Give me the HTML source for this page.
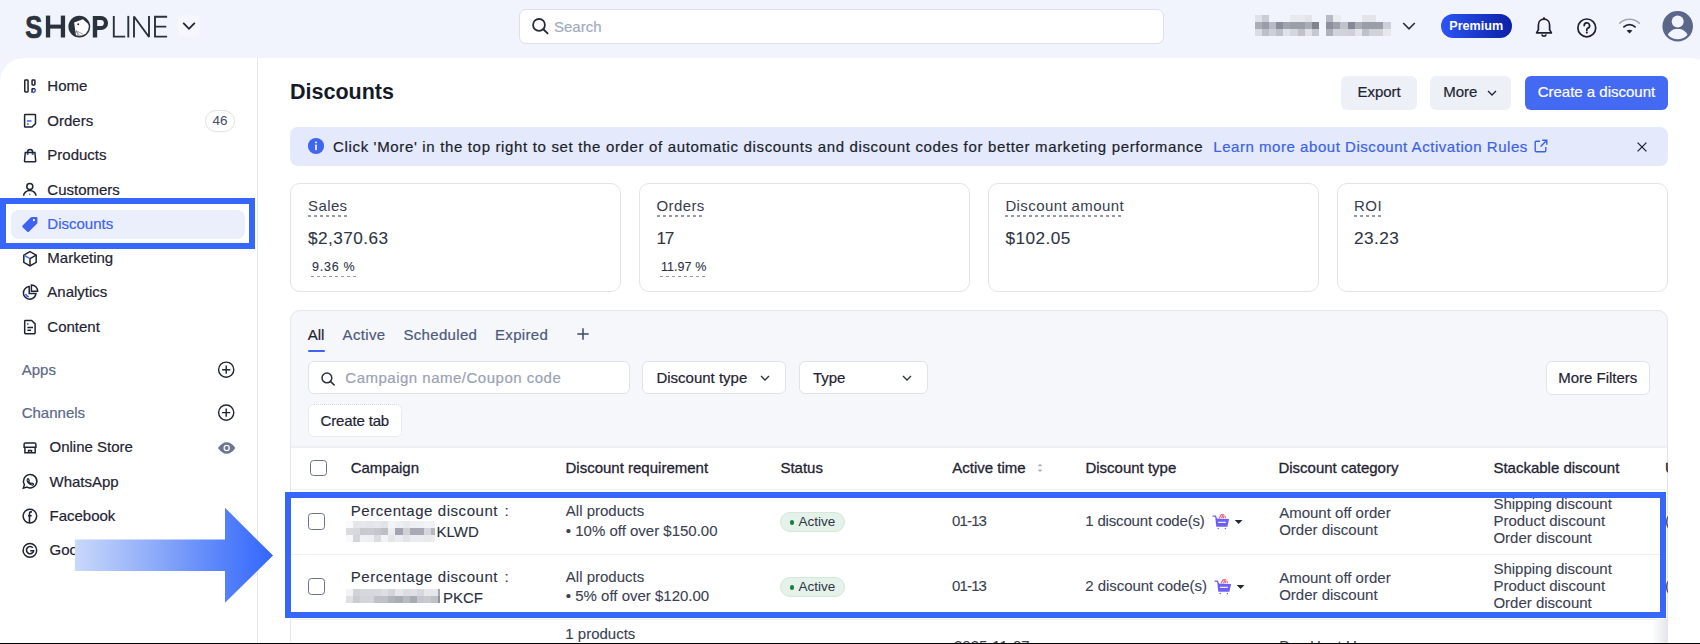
<!DOCTYPE html>
<html><head><meta charset="utf-8">
<style>
*{box-sizing:border-box;margin:0;padding:0}
html,body{width:1700px;height:644px;overflow:hidden}
body{position:relative;background:#F1F4FD;font-family:"Liberation Sans",sans-serif;color:#1F2433;font-size:15px}
.a{position:absolute;white-space:nowrap}
.t{position:absolute;white-space:nowrap;line-height:20px;height:20px;-webkit-text-stroke-width:0.2px}
svg{position:absolute;overflow:visible}
.btn{-webkit-text-stroke-width:0.2px}
.card{width:331.3px;height:108.3px;border:1px solid #E2E4EC;border-radius:10px;background:#fff}
.lbl{color:#363D4E;letter-spacing:0.4px;-webkit-text-stroke-width:0}
.lbl::after{content:"";position:absolute;left:0;right:0;top:19.2px;height:1.7px;background:repeating-linear-gradient(90deg,#959BAD 0 3.1px,transparent 3.1px 5.95px)}
.val{font-size:17.2px;color:#2E3545;letter-spacing:0.45px;-webkit-text-stroke-width:0.1px}
.pct{font-size:12.5px;color:#2C3345;letter-spacing:0.75px;-webkit-text-stroke-width:0.1px}
.pct::after{content:"";position:absolute;left:-1.2px;right:-0.6px;top:18.3px;height:1.6px;background:repeating-linear-gradient(90deg,#959BAD 0 3.1px,transparent 3.1px 5.95px)}
.tab{color:#4D5A7C;letter-spacing:0.33px}
.fbox{background:#fff;border:1px solid #E0E3EB;border-radius:6px}
.cb{width:17.3px;height:16.9px;border:1.5px solid #6B7191;border-radius:3.5px;background:#fff}
.th{color:#1F2433;-webkit-text-stroke-width:0.3px}
.td{color:#3A4152;-webkit-text-stroke-width:0.1px}
.badge{width:65px;height:19.8px;border-radius:10px;background:#E4F2EA;border:1px solid #D3E7DB;font-size:13.5px;line-height:17.8px;padding-left:17.5px;color:#2F3647}
.badge i{position:absolute;left:8.8px;top:7.3px;width:4.6px;height:4.6px;border-radius:50%;background:#1F7A45}
.cart{width:18px;height:16px}
</style></head><body>

<!-- TOP BAR -->
<svg width="1700" height="58" style="left:0;top:0" viewBox="0 0 1700 58">
  <g fill="#2A323D">
    <text x="25.3" y="37.6" font-family="Liberation Sans" font-weight="700" font-size="30.5" textLength="17" lengthAdjust="spacingAndGlyphs" stroke="#2A323D" stroke-width="0.7">S</text>
    <rect x="45.9" y="15.6" width="4.3" height="21.9"/>
    <rect x="60.8" y="15.6" width="4.3" height="21.9"/>
    <rect x="48" y="24.6" width="15" height="4"/>
    <circle cx="79.3" cy="26.6" r="10.9"/>
    <path d="M92.8 15.9h8.2a7.1 7.1 0 0 1 0 14.2h-3.8v7.4h-4.4zM97.2 19.9v6.2h3.6a3.1 3.1 0 0 0 0-6.2z" fill-rule="evenodd"/>
  </g>
  <g fill="none" stroke="#2A323D" stroke-width="1.9">
    <path d="M113.8 15.9V36.6H125.2"/>
    <path d="M128.3 15.9V37.5"/>
    <path d="M134 37.5V16.5L149 37V15.9" stroke-linejoin="bevel"/>
    <path d="M167.1 16.8H155V36.6H167.1M155 26.6H166.3"/>
  </g>
  <defs><clipPath id="oc"><circle cx="79.3" cy="26.6" r="9.5"/></clipPath></defs>
  <path d="M74.1 22.6L82.9 19.3L96 31L84 44L76.3 37.5Z" fill="#fff" clip-path="url(#oc)"/>
  <circle cx="78.2" cy="24.2" r="1" fill="#2A323D"/>
  <path d="M76 30.6L83.4 34.4M76.5 31.6L81 36.8M76.2 31L78.6 36.6" stroke="#2A323D" stroke-width="0.45" fill="none"/>
  <rect x="177.8" y="15.5" width="21.7" height="21" rx="4" fill="#F5F7FD"/>
  <path d="M183.2 22.8L189 28.8L194.8 22.8" fill="none" stroke="#1F2433" stroke-width="1.8"/>
</svg>

<!-- search -->
<div class="a" style="left:519.3px;top:9.3px;width:645px;height:34.4px;background:#fff;border:1px solid #DCE0EA;border-radius:7px"></div>
<svg width="20" height="20" style="left:530px;top:16px" viewBox="0 0 20 20"><circle cx="9" cy="8.9" r="5.9" fill="none" stroke="#262B3A" stroke-width="1.8"/><path d="M13.3 13.3L17.6 17.4" stroke="#262B3A" stroke-width="1.9" stroke-linecap="round"/></svg>
<div class="t" style="left:554px;top:16.5px;color:#A3ABBF;font-size:15px">Search</div>

<!-- account -->
<svg width="1700" height="58" style="left:0;top:0" viewBox="0 0 1700 58" shape-rendering="crispEdges"><rect x="1254.5" y="15.0" width="7.4" height="7.2" fill="#E0E2EA"/><rect x="1261.7" y="15.0" width="7.4" height="7.2" fill="#C9CCD5"/><rect x="1290.3" y="15.0" width="7.4" height="7.2" fill="#E8EAF0"/><rect x="1297.5" y="15.0" width="7.4" height="7.2" fill="#E8EAF0"/><rect x="1304.7" y="15.0" width="7.4" height="7.2" fill="#E2E4EA"/><rect x="1254.5" y="22.0" width="7.4" height="7.2" fill="#A9ADB8"/><rect x="1261.7" y="22.0" width="7.4" height="7.2" fill="#9A9EAA"/><rect x="1268.8" y="22.0" width="7.4" height="7.2" fill="#B8BBC5"/><rect x="1276.0" y="22.0" width="7.4" height="7.2" fill="#8A8E9B"/><rect x="1283.2" y="22.0" width="7.4" height="7.2" fill="#A0A4AF"/><rect x="1290.3" y="22.0" width="7.4" height="7.2" fill="#9A9EA9"/><rect x="1297.5" y="22.0" width="7.4" height="7.2" fill="#9A9EA9"/><rect x="1304.7" y="22.0" width="7.4" height="7.2" fill="#A9ADB7"/><rect x="1311.9" y="22.0" width="7.4" height="7.2" fill="#80848F"/><rect x="1254.5" y="29.0" width="7.4" height="7.2" fill="#DADCE3"/><rect x="1261.7" y="29.0" width="7.4" height="7.2" fill="#BDC0C9"/><rect x="1268.8" y="29.0" width="7.4" height="7.2" fill="#CDD0D8"/><rect x="1276.0" y="29.0" width="7.4" height="7.2" fill="#BDC0C9"/><rect x="1283.2" y="29.0" width="7.4" height="7.2" fill="#E0E2E9"/><rect x="1290.3" y="29.0" width="7.4" height="7.2" fill="#D3D6DD"/><rect x="1297.5" y="29.0" width="7.4" height="7.2" fill="#BFC2CA"/><rect x="1304.7" y="29.0" width="7.4" height="7.2" fill="#E0E2E8"/><rect x="1311.9" y="29.0" width="7.4" height="7.2" fill="#C5C8D0"/><rect x="1326.0" y="15.0" width="7.4" height="7.2" fill="#B8BBC4"/><rect x="1333.2" y="15.0" width="7.4" height="7.2" fill="#EBEDF2"/><rect x="1361.8" y="15.0" width="7.4" height="7.2" fill="#E3E5EB"/><rect x="1369.0" y="15.0" width="7.4" height="7.2" fill="#E3E5EB"/><rect x="1326.0" y="22.0" width="7.4" height="7.2" fill="#8C909C"/><rect x="1333.2" y="22.0" width="7.4" height="7.2" fill="#9DA1AC"/><rect x="1340.3" y="22.0" width="7.4" height="7.2" fill="#C0C3CC"/><rect x="1347.5" y="22.0" width="7.4" height="7.2" fill="#858995"/><rect x="1354.7" y="22.0" width="7.4" height="7.2" fill="#A9ADB7"/><rect x="1361.8" y="22.0" width="7.4" height="7.2" fill="#9A9EAA"/><rect x="1369.0" y="22.0" width="7.4" height="7.2" fill="#9A9EA9"/><rect x="1376.2" y="22.0" width="7.4" height="7.2" fill="#9A9EA9"/><rect x="1383.4" y="22.0" width="7.4" height="7.2" fill="#CDD0D8"/><rect x="1326.0" y="29.0" width="7.4" height="7.2" fill="#AEB1BB"/><rect x="1333.2" y="29.0" width="7.4" height="7.2" fill="#D0D3DA"/><rect x="1340.3" y="29.0" width="7.4" height="7.2" fill="#D0D3DA"/><rect x="1347.5" y="29.0" width="7.4" height="7.2" fill="#CDD0D8"/><rect x="1354.7" y="29.0" width="7.4" height="7.2" fill="#E3E5EB"/><rect x="1361.8" y="29.0" width="7.4" height="7.2" fill="#BEC1CA"/><rect x="1369.0" y="29.0" width="7.4" height="7.2" fill="#D0D3DA"/><rect x="1376.2" y="29.0" width="7.4" height="7.2" fill="#D0D3DA"/><rect x="1383.4" y="29.0" width="7.4" height="7.2" fill="#E6E8EE"/></svg>
<svg width="14" height="10" style="left:1402px;top:21px" viewBox="0 0 14 10"><path d="M1.2 2L7 7.8L12.8 2" fill="none" stroke="#2B3040" stroke-width="1.7"/></svg>
<div class="a" style="left:1440.6px;top:14.4px;width:71.2px;height:23.6px;border-radius:12px;background:linear-gradient(90deg,#2D55F6,#0B21A6);color:#fff;font-weight:700;font-size:12.6px;line-height:25.4px;text-align:center">Premium</div>
<svg width="20" height="22" style="left:1534px;top:16px" viewBox="0 0 20 22">
  <path d="M10 3.2c-3.3 0-5.6 2.6-5.6 5.8v4.6L2.6 16.8h14.8l-1.8-3.2V9c0-3.2-2.3-5.8-5.6-5.8z" fill="none" stroke="#1C2030" stroke-width="1.7" stroke-linejoin="round"/>
  <path d="M10 1.8v1.4" stroke="#1C2030" stroke-width="1.7" stroke-linecap="round"/>
  <path d="M7.8 18.6a2.3 2.3 0 0 0 4.4 0" fill="none" stroke="#1C2030" stroke-width="1.7"/>
</svg>
<svg width="22" height="22" style="left:1576px;top:16.6px" viewBox="0 0 22 22">
  <circle cx="10.8" cy="10.9" r="8.9" fill="none" stroke="#1C2030" stroke-width="1.7"/>
  <path d="M8.2 8.6a2.7 2.7 0 1 1 3.8 2.5c-.8.4-1.2.9-1.2 1.7v.6" fill="none" stroke="#1C2030" stroke-width="1.7" stroke-linecap="round"/>
  <circle cx="10.8" cy="15.6" r="1.05" fill="#1C2030"/>
</svg>
<svg width="24" height="18" style="left:1618px;top:18.4px" viewBox="0 0 24 18">
  <path d="M1.8 5.2A14 14 0 0 1 21.2 5.2" fill="none" stroke="#A3A9B8" stroke-width="1.6" stroke-linecap="round"/>
  <path d="M5.9 8.9A8 8 0 0 1 17.1 8.9" fill="none" stroke="#1F2433" stroke-width="1.7" stroke-linecap="round"/>
  <path d="M8.6 12.6L11.5 15.6L14.4 12.6Q11.5 10.8 8.6 12.6z" fill="#1F2433"/>
</svg>
<svg width="32" height="32" style="left:1661.5px;top:10.6px" viewBox="0 0 32 32">
  <defs><clipPath id="av"><circle cx="15.7" cy="15.3" r="12.9"/></clipPath></defs>
  <circle cx="15.7" cy="15.3" r="15.3" fill="#5B6788"/>
  <g clip-path="url(#av)">
    <circle cx="15.7" cy="29.2" r="11.4" fill="#F1F4FD"/>
    <circle cx="15.7" cy="10.4" r="7.7" fill="#5B6788"/>
  </g>
  <circle cx="15.7" cy="10.4" r="6" fill="#F1F4FD"/>
</svg>

<!-- SIDEBAR -->
<div class="a" style="left:0;top:58px;width:258px;height:586px;background:#fff;border-top-left-radius:24px;border-right:1px solid #E6E8F0"></div>
<!-- MAIN -->
<div class="a" style="left:258px;top:58px;width:1456px;height:586px;background:#fff;border-top-right-radius:24px"></div>

<div id="side">
<!-- nav text -->
<div class="t" style="left:47.3px;top:76.3px">Home</div>
<div class="t" style="left:47.3px;top:110.6px">Orders</div>
<div class="t" style="left:47.3px;top:145.1px">Products</div>
<div class="t" style="left:47.3px;top:179.9px">Customers</div>
<div class="a" style="left:0;top:198.3px;width:255px;height:50.8px;border:6px solid #3767F8;border-left-width:6px"></div>
<div class="a" style="left:10.8px;top:209.9px;width:234.6px;height:29px;border-radius:8px;background:#EBEFFC"></div>
<div class="t" style="left:47.3px;top:214.1px;color:#3D63F0">Discounts</div>
<div class="t" style="left:47.3px;top:248.2px">Marketing</div>
<div class="t" style="left:47.3px;top:282.4px">Analytics</div>
<div class="t" style="left:47.3px;top:316.6px">Content</div>
<div class="a" style="left:205.4px;top:110.4px;width:29.4px;height:21.3px;border:1px solid #DFE2EA;border-radius:11px;font-size:13.5px;line-height:19.5px;text-align:center;color:#474D5D">46</div>

<div class="t" style="left:21.7px;top:359.9px;color:#5B6889">Apps</div>
<div class="t" style="left:21.7px;top:402.8px;color:#5B6889">Channels</div>
<div class="t" style="left:49.5px;top:437.2px">Online Store</div>
<div class="t" style="left:49.5px;top:471.7px">WhatsApp</div>
<div class="t" style="left:49.5px;top:506.2px">Facebook</div>
<div class="t" style="left:49.5px;top:540.2px">Google</div>

<svg width="260" height="600" style="left:0;top:0" viewBox="0 0 260 600" fill="none" stroke="#1F2433" stroke-width="1.5">
  <!-- home -->
  <rect x="24.75" y="80.05" width="3.3" height="12" rx="0.7"/>
  <rect x="32.05" y="80.05" width="2.85" height="4.9" rx="0.6"/>
  <path d="M32.05 92.8V89.3q0-.6.6-.6h2.3"/>
  <path d="M35.4 89.4q0 2.5-2.2 3" stroke="#3D63F0" stroke-linecap="round"/>
  <!-- orders -->
  <path d="M24.6 115.3q0-.7.7-.7h9.5q.7 0 .7.7v8.3l-3.5 3.5h-6.7q-.7 0-.7-.7z"/>
  <path d="M26.9 121.1h4.6M26.9 124h1.8" stroke="#3D63F0"/>
  <!-- products -->
  <path d="M25.3 152.4h9.6l.8 8.6q0 .8-.8.8h-9.6q-.8 0-.8-.8z"/>
  <path d="M27.6 154.8v-2.8a2.5 2.5 0 0 1 5 0v2.8"/>
  <path d="M27.6 153.4v1.6M32.6 153.4v1.6" stroke="#3D63F0"/>
  <!-- customers -->
  <circle cx="29.8" cy="186.4" r="3"/>
  <path d="M23.6 195.8a6.2 5.2 0 0 1 12.4 0"/>
  <path d="M29.2 193.2l1.6 1-1.6 1z" fill="#3D63F0" stroke="none"/>
  <!-- marketing -->
  <path d="M30 251.7l6.2 3.5v7.1l-6.2 3.5-6.2-3.5v-7.1z"/>
  <path d="M30 258.7l6.2-3.5M30 258.7v7"/>
  <path d="M23.8 255.2l6.2 3.5" stroke="#3D63F0"/>
  <!-- analytics -->
  <path d="M29.2 286.6a6.3 6.3 0 1 0 6.8 6.8h-6.8z"/>
  <path d="M31.4 284.9v6.4h6.2a6.3 6.3 0 0 0-6.2-6.4z"/>
  <path d="M25.8 293.8a3.6 3.6 0 0 0 3 3" stroke="#3D63F0"/>
  <!-- content -->
  <path d="M24.7 321.2q0-.7.7-.7h6.3l3.4 3.4v9.2q0 .7-.7.7h-9q-.7 0-.7-.7z"/>
  <path d="M27.4 327.4h5.6M27.4 330.3h3.6"/>
  <circle cx="27.8" cy="324" r="0.9" fill="#3D63F0" stroke="none"/>
  <!-- apps plus -->
  <circle cx="226.2" cy="369.7" r="7.6" stroke-width="1.4"/>
  <path d="M226.2 365.6v8.2M222.1 369.7h8.2" stroke-width="1.4"/>
  <circle cx="226.2" cy="412.6" r="7.6" stroke-width="1.4"/>
  <path d="M226.2 408.5v8.2M222.1 412.6h8.2" stroke-width="1.4"/>
  <!-- store -->
  <path d="M24.1 447.3v-3.1q0-1.3 1.3-1.3h9.2q1.3 0 1.3 1.3v3.1z"/>
  <path d="M24.9 447.3v5.5h10.3v-5.5M28.6 452.8v-2.4h2.9v2.4"/>
  <!-- whatsapp -->
  <path d="M23.3 488.2l1.1-3.6a6.7 6.7 0 1 1 2.6 2.5z"/>
  <path d="M27.4 479.2q.3-.7.9-.5l.9 1.6q.1.4-.5.9.7 1.6 2.3 2.3.5-.6.9-.5l1.6.9q.2.6-.5 1.1-1 .6-3.3-.9-2.4-1.8-2.6-3.6 0-.8.3-1.3z" stroke-width="1.2"/>
  <!-- facebook -->
  <circle cx="29.9" cy="516.1" r="6.8"/>
  <path d="M31.9 511.9h-1q-1.4 0-1.4 1.4v9.6M28 515.7h3.7" stroke-width="1.6"/>
  <!-- google -->
  <circle cx="29.9" cy="550.4" r="6.8"/>
  <path d="M32.8 547.8a3.6 3.6 0 1 0 .8 3h-3.4" stroke-width="1.6"/>
</svg>
<!-- eye -->
<svg width="20" height="14" style="left:216.5px;top:440.5px" viewBox="0 0 20 14">
  <path d="M1 7Q5 1.2 9.7 1.2T18.4 7Q14.4 12.8 9.7 12.8T1 7z" fill="#6B7590"/>
  <circle cx="9.7" cy="7" r="3.2" fill="#fff"/>
  <circle cx="9.7" cy="7" r="1.9" fill="#6B7590"/>
</svg>
<!-- discount tag icon -->
<svg width="18" height="18" style="left:21px;top:215px" viewBox="0 0 18 18">
  <path d="M1.6 10.6L9.6 2.4q.5-.5 1.2-.5h4.4q1.2 0 1.2 1.2v4.4q0 .7-.5 1.2l-8 8q-.8.8-1.6 0L1.6 12.2q-.8-.8 0-1.6z" fill="#3D63F0"/>
  <circle cx="12.9" cy="5.1" r="1.1" fill="#fff"/>
</svg>
</div>

<div id="main">
<div class="a" style="left:290px;top:78px;font-size:21.5px;font-weight:700;line-height:28px;color:#151A26">Discounts</div>
<div class="a btn" style="left:1341.3px;top:75.9px;width:75.6px;height:33.7px;background:#EDF0F7;border-radius:6px;line-height:31.8px;text-align:center">Export</div>
<div class="a btn" style="left:1430.3px;top:75.9px;width:80.9px;height:33.7px;background:#EDF0F7;border-radius:6px;line-height:31.8px;padding-left:12.9px">More</div>
<svg width="12" height="8" style="left:1485.5px;top:88.5px" viewBox="0 0 12 8"><path d="M2 2L6 6L10 2" fill="none" stroke="#1F2433" stroke-width="1.3"/></svg>
<div class="a btn" style="left:1525.2px;top:75.9px;width:142.5px;height:33.7px;background:#4469F2;border-radius:6px;line-height:31.8px;text-align:center;color:#fff">Create a discount</div>

<!-- banner -->
<div class="a" style="left:290px;top:127.3px;width:1378px;height:38.5px;background:#E4E9FB;border-radius:8px"></div>
<svg width="18" height="18" style="left:306.6px;top:137.3px" viewBox="0 0 18 18"><circle cx="9" cy="9" r="8.1" fill="#3F66F0"/><rect x="8.2" y="7.6" width="1.6" height="5.6" fill="#fff"/><circle cx="9" cy="5.4" r="0.95" fill="#fff"/></svg>
<div class="t" id="bantxt" style="left:333px;top:136.6px;letter-spacing:0.66px;color:#1A1F2B">Click 'More' in the top right to set the order of automatic discounts and discount codes for better marketing performance</div>
<div class="t" id="banlink" style="left:1213.3px;top:136.6px;letter-spacing:0.54px;color:#3B62E6">Learn more about Discount Activation Rules</div>
<svg width="16" height="16" style="left:1533px;top:138px" viewBox="0 0 16 16"><path d="M7 3.2H3.2q-1 0-1 1v8.6q0 1 1 1h8.6q1-0 1-1V9" fill="none" stroke="#3B62E6" stroke-width="1.4"/><path d="M9.2 2.2h4.6v4.6M13.6 2.4L7.6 8.4" fill="none" stroke="#3B62E6" stroke-width="1.4"/></svg>
<svg width="14" height="14" style="left:1634.8px;top:139.8px" viewBox="0 0 14 14"><path d="M2.6 2.6L11.4 11.4M11.4 2.6L2.6 11.4" stroke="#1F2433" stroke-width="1.3"/></svg>

<!-- cards -->
<div class="a card" style="left:290px;top:183.4px"></div>
<div class="a card" style="left:639px;top:183.4px"></div>
<div class="a card" style="left:987.5px;top:183.4px"></div>
<div class="a card" style="left:1336.7px;top:183.4px"></div>
<div class="t lbl" style="left:308px;top:195.7px">Sales</div>
<div class="t lbl" style="left:656.5px;top:195.7px">Orders</div>
<div class="t lbl" style="left:1005.4px;top:195.7px">Discount amount</div>
<div class="t lbl" style="left:1354.1px;top:195.7px">ROI</div>
<div class="t val" style="left:308px;top:228.3px">$2,370.63</div>
<div class="t val" style="left:656.5px;top:228.3px;letter-spacing:-1.4px">17</div>
<div class="t val" style="left:1005.4px;top:228.3px">$102.05</div>
<div class="t val" style="left:1354.1px;top:228.3px">23.23</div>
<div class="t pct" style="left:312px;top:257.4px">9.36 %</div>
<div class="t pct" style="left:661px;top:257.4px;letter-spacing:0.05px">11.97 %</div>

<!-- table panel -->
<div class="a" style="left:290px;top:309.5px;width:1378px;height:340px;background:#F6F7FB;border:1px solid #E4E6EE;border-radius:10px"></div>
</div>


<!-- tabs -->
<div class="t" style="left:307.7px;top:324.5px;color:#1F2433">All</div>
<div class="t tab" style="left:342.6px;top:324.5px">Active</div>
<div class="t tab" style="left:403.4px;top:324.5px">Scheduled</div>
<div class="t tab" style="left:495px;top:324.5px">Expired</div>
<div class="a" style="left:307.7px;top:349.9px;width:17.3px;height:2.6px;border-radius:2px;background:#3D63F0"></div>
<svg width="14" height="14" style="left:576px;top:327.3px" viewBox="0 0 14 14"><path d="M7 1.3v11.4M1.3 7h11.4" stroke="#3E4A66" stroke-width="1.5"/></svg>

<!-- filters -->
<div class="a fbox" style="left:307.7px;top:361.3px;width:321.9px;height:33.1px"></div>
<svg width="16" height="16" style="left:320px;top:370.5px" viewBox="0 0 16 16"><circle cx="6.9" cy="6.9" r="4.9" fill="none" stroke="#2B3040" stroke-width="1.5"/><path d="M10.4 10.4L14.2 14" stroke="#2B3040" stroke-width="1.6" stroke-linecap="round"/></svg>
<div class="t" style="left:345.3px;top:367.6px;color:#9AA1B5;letter-spacing:0.5px">Campaign name/Coupon code</div>
<div class="a fbox" style="left:642.4px;top:361.3px;width:143.5px;height:33px"></div>
<div class="t" style="left:656.4px;top:368px">Discount type</div>
<svg width="12" height="8" style="left:759.3px;top:374px" viewBox="0 0 12 8"><path d="M2 2L6 6L10 2" fill="none" stroke="#2B3040" stroke-width="1.3"/></svg>
<div class="a fbox" style="left:798.7px;top:361.3px;width:128.9px;height:33px"></div>
<div class="t" style="left:812.9px;top:368px">Type</div>
<svg width="12" height="8" style="left:900.5px;top:374px" viewBox="0 0 12 8"><path d="M2 2L6 6L10 2" fill="none" stroke="#2B3040" stroke-width="1.3"/></svg>
<div class="a fbox" style="left:1545.7px;top:361.2px;width:104.2px;height:33.6px"></div>
<div class="t" style="left:1558.2px;top:367.6px">More Filters</div>
<div class="a" style="left:307.7px;top:404px;width:93.9px;height:33.4px;border:1px dotted #D5D8E0;border-radius:6px;background:#fff"></div>
<div class="t" style="left:320.5px;top:410.7px;letter-spacing:-0.15px">Create tab</div>

<!-- table -->
<div class="a" style="left:291px;top:446px;width:1376px;height:2px;background:#EEF0F4"></div>
<div class="a" style="left:291px;top:448px;width:1376px;height:200px;background:#fff"></div>
<div class="a" style="left:291px;top:489px;width:1376px;height:1px;background:#EDEFF3"></div>
<div class="a" style="left:291px;top:553.8px;width:1376px;height:1px;background:#EDEFF3"></div>
<div class="a" style="left:291px;top:618.6px;width:1376px;height:1px;background:#EDEFF3"></div>
<div class="a cb" style="left:309.6px;top:459.6px"></div>
<div class="t th" style="left:350.7px;top:458px">Campaign</div>
<div class="t th" style="left:565.5px;top:458px">Discount requirement</div>
<div class="t th" style="left:780.4px;top:458px">Status</div>
<div class="t th" style="left:952.3px;top:458px">Active time</div>
<svg width="8" height="14" style="left:1035.8px;top:460.8px" viewBox="0 0 8 14"><path d="M1.5 5.3L4 2.8L6.5 5.3z" fill="#A8AEBE"/><path d="M1.5 8.5L4 11L6.5 8.5z" fill="#A8AEBE"/></svg>
<div class="t th" style="left:1085.4px;top:458px">Discount type</div>
<div class="t th" style="left:1278.4px;top:458px">Discount category</div>
<div class="t th" style="left:1493.4px;top:458px">Stackable discount</div>
<div class="t th" style="left:1665px;top:458px;width:3px;overflow:hidden">U</div>

<!-- row1 -->
<div class="a cb" style="left:307.9px;top:513.2px"></div>
<div class="t td" style="left:350.7px;top:500.7px;color:#2A3040"><span style="letter-spacing:0.56px">Percentage discount</span><span style="position:absolute;left:153.7px;top:0">:</span></div>
<svg width="1700" height="644" style="left:0;top:0" viewBox="0 0 1700 644" shape-rendering="crispEdges"><rect x="346.00" y="521.00" width="7.22" height="7.15" fill="#FAFAFC"/><rect x="353.07" y="521.00" width="7.22" height="7.15" fill="#E5E6EB"/><rect x="360.14" y="521.00" width="7.22" height="7.15" fill="#E6E7EC"/><rect x="367.21" y="521.00" width="7.22" height="7.15" fill="#E4E5EA"/><rect x="374.28" y="521.00" width="7.22" height="7.15" fill="#E7E8ED"/><rect x="381.35" y="521.00" width="7.22" height="7.15" fill="#E2E3E8"/><rect x="388.42" y="521.00" width="7.22" height="7.15" fill="#F3F4F6"/><rect x="395.49" y="521.00" width="7.22" height="7.15" fill="#EEEFF2"/><rect x="402.56" y="521.00" width="7.22" height="7.15" fill="#E9EAEE"/><rect x="409.63" y="521.00" width="7.22" height="7.15" fill="#EEEFF2"/><rect x="416.70" y="521.00" width="7.22" height="7.15" fill="#EFF0F3"/><rect x="423.77" y="521.00" width="7.22" height="7.15" fill="#F2F3F5"/><rect x="430.84" y="521.00" width="4.35" height="7.15" fill="#F0F1F4"/><rect x="346.00" y="528.00" width="7.22" height="7.15" fill="#DADBE0"/><rect x="353.07" y="528.00" width="7.22" height="7.15" fill="#D6D8DD"/><rect x="360.14" y="528.00" width="7.22" height="7.15" fill="#C7C9D0"/><rect x="367.21" y="528.00" width="7.22" height="7.15" fill="#C9CBD1"/><rect x="374.28" y="528.00" width="7.22" height="7.15" fill="#C5C7CE"/><rect x="381.35" y="528.00" width="7.22" height="7.15" fill="#BDBFC7"/><rect x="388.42" y="528.00" width="7.22" height="7.15" fill="#ECEDF0"/><rect x="395.49" y="528.00" width="7.22" height="7.15" fill="#A2A5AF"/><rect x="402.56" y="528.00" width="7.22" height="7.15" fill="#CFD1D7"/><rect x="409.63" y="528.00" width="7.22" height="7.15" fill="#A8ABB5"/><rect x="416.70" y="528.00" width="7.22" height="7.15" fill="#A8ABB5"/><rect x="423.77" y="528.00" width="7.22" height="7.15" fill="#D3D5DA"/><rect x="430.84" y="528.00" width="4.35" height="7.15" fill="#B5B8C0"/><rect x="346.00" y="535.00" width="7.22" height="7.15" fill="#F9F9FB"/><rect x="353.07" y="535.00" width="7.22" height="7.15" fill="#D3D5DA"/><rect x="360.14" y="535.00" width="7.22" height="7.15" fill="#F0F1F3"/><rect x="367.21" y="535.00" width="7.22" height="7.15" fill="#EEEFF2"/><rect x="374.28" y="535.00" width="7.22" height="7.15" fill="#DADCE1"/><rect x="381.35" y="535.00" width="7.22" height="7.15" fill="#F2F3F5"/><rect x="388.42" y="535.00" width="7.22" height="7.15" fill="#E4E5EA"/><rect x="395.49" y="535.00" width="7.22" height="7.15" fill="#EBECEF"/><rect x="402.56" y="535.00" width="7.22" height="7.15" fill="#E3E4E9"/><rect x="409.63" y="535.00" width="7.22" height="7.15" fill="#EBECEF"/><rect x="416.70" y="535.00" width="7.22" height="7.15" fill="#EBECEF"/><rect x="423.77" y="535.00" width="7.22" height="7.15" fill="#E8E9ED"/><rect x="430.84" y="535.00" width="4.35" height="7.15" fill="#EDEEF1"/><rect x="346.00" y="589.30" width="7.22" height="6.95" fill="#F3F3F6"/><rect x="353.07" y="589.30" width="7.22" height="6.95" fill="#D2D3D9"/><rect x="360.14" y="589.30" width="7.22" height="6.95" fill="#D6D8DD"/><rect x="367.21" y="589.30" width="7.22" height="6.95" fill="#D6D8DD"/><rect x="374.28" y="589.30" width="7.22" height="6.95" fill="#D8D9DE"/><rect x="381.35" y="589.30" width="7.22" height="6.95" fill="#DDDEE3"/><rect x="388.42" y="589.30" width="7.22" height="6.95" fill="#D3D5DA"/><rect x="395.49" y="589.30" width="7.22" height="6.95" fill="#E6E7EB"/><rect x="402.56" y="589.30" width="7.22" height="6.95" fill="#DCDDE2"/><rect x="409.63" y="589.30" width="7.22" height="6.95" fill="#DFE0E5"/><rect x="416.70" y="589.30" width="7.22" height="6.95" fill="#D6D8DD"/><rect x="423.77" y="589.30" width="7.22" height="6.95" fill="#E6E7EA"/><rect x="430.84" y="589.30" width="7.22" height="6.95" fill="#E6E7EA"/><rect x="437.91" y="589.30" width="2.55" height="6.95" fill="#A5A8B2"/><rect x="346.00" y="596.10" width="7.22" height="6.95" fill="#DFE0E4"/><rect x="353.07" y="596.10" width="7.22" height="6.95" fill="#CACCD2"/><rect x="360.14" y="596.10" width="7.22" height="6.95" fill="#D3D5DA"/><rect x="367.21" y="596.10" width="7.22" height="6.95" fill="#D3D5DA"/><rect x="374.28" y="596.10" width="7.22" height="6.95" fill="#BFC1C8"/><rect x="381.35" y="596.10" width="7.22" height="6.95" fill="#BFC1C8"/><rect x="388.42" y="596.10" width="7.22" height="6.95" fill="#B1B4BC"/><rect x="395.49" y="596.10" width="7.22" height="6.95" fill="#AAADB6"/><rect x="402.56" y="596.10" width="7.22" height="6.95" fill="#B8BBC2"/><rect x="409.63" y="596.10" width="7.22" height="6.95" fill="#A8ABB5"/><rect x="416.70" y="596.10" width="7.22" height="6.95" fill="#C5C7CE"/><rect x="423.77" y="596.10" width="7.22" height="6.95" fill="#C8CAD0"/><rect x="430.84" y="596.10" width="7.22" height="6.95" fill="#BFC1C8"/><rect x="437.91" y="596.10" width="2.55" height="6.95" fill="#8F939E"/></svg>
<div class="t td" style="left:436.5px;top:522.1px;color:#2A3040">KLWD</div>
<div class="t td" style="left:565.8px;top:501.2px">All products</div>
<div class="t td" style="left:565.8px;top:520.6px">• 10% off over $150.00</div>
<div class="a badge" style="left:780.1px;top:512px"><i></i>Active</div>
<div class="t td" style="left:952px;top:511.2px;letter-spacing:-0.85px">01-13</div>
<div class="t td" style="left:1085.3px;top:511.2px;letter-spacing:-0.18px">1 discount code(s)</div>
<svg width="20" height="18" style="left:1211px;top:512px" viewBox="1211 512 20 18">
<path d="M1219 518.2L1221.3 514.6M1221.5 518.2L1223.3 514.4M1223.6 518.2L1222.8 514.6M1225.6 518.2L1224.9 516" stroke="#F0607F" stroke-width="1.1" fill="none"/><path d="M1220.6 515Q1222.5 513.6 1224.6 515.4" stroke="#F0607F" stroke-width="1" fill="none"/>
<path d="M1213 516.1H1215.5L1216.3 518.6" fill="none" stroke="#6D5FF4" stroke-width="1.4" stroke-linecap="round"/>
<path d="M1215.4 518.4L1229.1 518.9L1227.4 526.7H1216.3z" fill="#6D5FF4"/>
<path d="M1218.1 522.3H1225.8" stroke="#fff" stroke-width="1.1"/>
<circle cx="1218.2" cy="528.4" r="0.75" fill="#6D5FF4"/><circle cx="1225.4" cy="528.4" r="0.75" fill="#6D5FF4"/>
</svg>
<svg width="10" height="6" style="left:1234.2px;top:519px" viewBox="0 0 10 6"><path d="M0.7 1.1H8.5L4.6 5z" fill="#232838"/></svg>
<div class="t td" style="left:1279.2px;top:502.8px">Amount off order</div>
<div class="t td" style="left:1279.2px;top:520px">Order discount</div>
<div class="t td" style="left:1493.4px;top:494.1px">Shipping discount</div>
<div class="t td" style="left:1493.4px;top:511.2px">Product discount</div>
<div class="t td" style="left:1493.4px;top:528.3px">Order discount</div>
<div class="t td" style="left:1665px;top:511.2px;width:3px;overflow:hidden">(</div>

<!-- row2 -->
<div class="a cb" style="left:307.9px;top:578.3px"></div>
<div class="t td" style="left:350.7px;top:566.8px;color:#2A3040"><span style="letter-spacing:0.56px">Percentage discount</span><span style="position:absolute;left:153.7px;top:0">:</span></div>

<div class="t td" style="left:443px;top:587.8px;color:#2A3040">PKCF</div>
<div class="t td" style="left:565.8px;top:566.5px">All products</div>
<div class="t td" style="left:565.8px;top:585.8px">• 5% off over $120.00</div>
<div class="a badge" style="left:780.1px;top:577px"><i></i>Active</div>
<div class="t td" style="left:952px;top:576.1px;letter-spacing:-0.85px">01-13</div>
<div class="t td" style="left:1085.3px;top:576.1px;letter-spacing:-0.05px">2 discount code(s)</div>
<svg width="20" height="18" style="left:1213.2px;top:577px" viewBox="1211 512 20 18">
<path d="M1219 518.2L1221.3 514.6M1221.5 518.2L1223.3 514.4M1223.6 518.2L1222.8 514.6M1225.6 518.2L1224.9 516" stroke="#F0607F" stroke-width="1.1" fill="none"/><path d="M1220.6 515Q1222.5 513.6 1224.6 515.4" stroke="#F0607F" stroke-width="1" fill="none"/>
<path d="M1213 516.1H1215.5L1216.3 518.6" fill="none" stroke="#6D5FF4" stroke-width="1.4" stroke-linecap="round"/>
<path d="M1215.4 518.4L1229.1 518.9L1227.4 526.7H1216.3z" fill="#6D5FF4"/>
<path d="M1218.1 522.3H1225.8" stroke="#fff" stroke-width="1.1"/>
<circle cx="1218.2" cy="528.4" r="0.75" fill="#6D5FF4"/><circle cx="1225.4" cy="528.4" r="0.75" fill="#6D5FF4"/>
</svg>
<svg width="10" height="6" style="left:1236.2px;top:584px" viewBox="0 0 10 6"><path d="M0.7 1.1H8.5L4.6 5z" fill="#232838"/></svg>
<div class="t td" style="left:1279.2px;top:567.8px">Amount off order</div>
<div class="t td" style="left:1279.2px;top:584.9px">Order discount</div>
<div class="t td" style="left:1493.4px;top:559px">Shipping discount</div>
<div class="t td" style="left:1493.4px;top:576.1px">Product discount</div>
<div class="t td" style="left:1493.4px;top:592.8px">Order discount</div>
<div class="t td" style="left:1665px;top:576.1px;width:3px;overflow:hidden">(</div>

<!-- row3 partial -->
<div class="t td" style="left:565.3px;top:624.1px">1 products</div>
<div class="t td" style="left:954px;top:636.3px">2025-11-07 ~</div>
<div class="t td" style="left:1279.2px;top:636.3px">Dec Heat Up</div>

<div class="a" style="left:1652px;top:619.6px;width:15px;height:24px;background:linear-gradient(90deg,rgba(230,232,238,0),#E4E6EC)"></div>
<!-- highlight box -->
<div class="a" style="left:285px;top:491.5px;width:1381px;height:126px;border:6px solid #3767F8"></div>

<svg width="1700" height="644" style="left:0;top:0" viewBox="0 0 1700 644">
<defs><linearGradient id="ag" x1="74.9" y1="0" x2="273" y2="0" gradientUnits="userSpaceOnUse">
<stop offset="0" stop-color="#C9D8FB"/><stop offset="0.4" stop-color="#8EABF9"/><stop offset="0.75" stop-color="#5582FA"/><stop offset="1" stop-color="#3366FF"/></linearGradient></defs>
<path d="M74.9 539.4H225V507.7L273 555.6L225 602.7V571H74.9z" fill="url(#ag)"/>
</svg>
<div class="a" style="left:0;top:643px;width:1700px;height:1px;background:#000"></div>
</body></html>
